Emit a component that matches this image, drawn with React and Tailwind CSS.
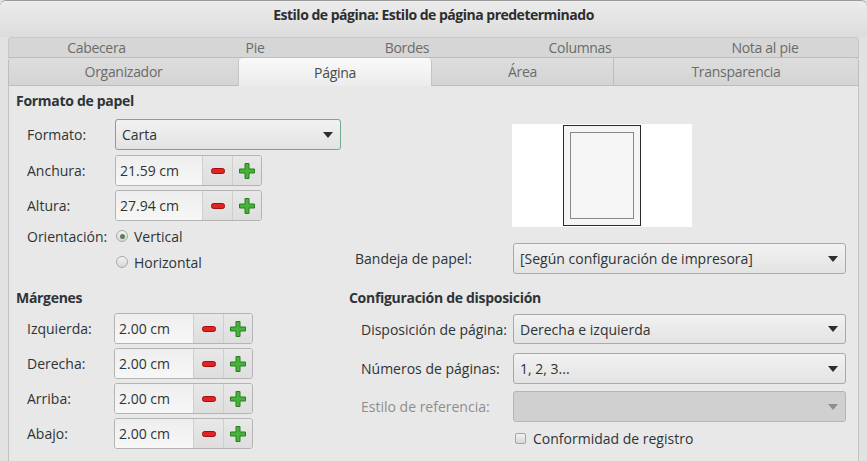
import React from "react";

const font = { fontFamily: '"Open Sans", "Noto Sans", sans-serif' };

function Arrow({ disabled }) {
  return (
    <svg width="10" height="6" viewBox="0 0 10 6" className="shrink-0">
      <path d="M0 0 L10 0 L5 6 Z" fill={disabled ? "#8e8e8e" : "#2e2e2e"} />
    </svg>
  );
}

function Minus() {
  return (
    <svg width="14" height="6" viewBox="0 0 14 6">
      <rect x="0.5" y="0.5" width="13" height="5" rx="2" fill="#e02424" stroke="#a01010" strokeWidth="1" />
    </svg>
  );
}

function Plus() {
  return (
    <svg width="16" height="16" viewBox="0 0 16 16">
      <path
        d="M6 0.5 H10 V6 H15.5 V10 H10 V15.5 H6 V10 H0.5 V6 H6 Z"
        fill="#46b43a"
        stroke="#2a7d20"
        strokeWidth="1"
        strokeLinejoin="round"
      />
    </svg>
  );
}

function Spin({ value, entryW }) {
  return (
    <div className="flex h-[31px] rounded-[3px] border border-[#b4b4b4] overflow-hidden">
      <div
        className={`${entryW} flex items-center pl-[4px] text-[14px] text-[#2e3436] bg-gradient-to-b from-[#eeeeee] to-[#f7f7f7]`}
      >
        {value}
      </div>
      <div className="w-[30px] flex items-center justify-center border-l border-[#cfcfcf] bg-gradient-to-b from-[#e8e8e8] to-[#dedede]">
        <Minus />
      </div>
      <div className="w-[29px] flex items-center justify-center border-l border-[#cfcfcf] bg-gradient-to-b from-[#e8e8e8] to-[#dedede]">
        <Plus />
      </div>
    </div>
  );
}

function Dropdown({ value, w, h = "h-[31px]", focus, disabled }) {
  const border = focus ? "border-[#6fab8c]" : disabled ? "border-[#b5b5b5]" : "border-[#a9a9a9]";
  const bg = disabled ? "bg-[#d0d0d0]" : "bg-gradient-to-b from-[#f2f2f2] to-[#e3e3e3]";
  return (
    <div
      className={`${w} ${h} ${bg} border ${border} rounded-[3px] flex items-center justify-between pl-[6px] pr-[7px] text-[14px] text-[#2e3436]`}
    >
      <span>{value}</span>
      <Arrow disabled={disabled} />
    </div>
  );
}

function Radio({ checked }) {
  return (
    <div className="w-[12px] h-[12px] rounded-full border border-[#a8a8a8] bg-gradient-to-b from-[#f4f4f4] to-[#d6d6d6] flex items-center justify-center">
      {checked && <div className="w-[5px] h-[5px] rounded-full bg-[#5e7f4e]" />}
    </div>
  );
}

export default function App() {
  const backTabs = [
    ["Cabecera", "w-[175px]"],
    ["Pie", "w-[142px]"],
    ["Bordes", "w-[162px]"],
    ["Columnas", "w-[184px]"],
    ["Nota al pie", "flex-1"],
  ];
  return (
    <div className="w-[867px] h-[461px] overflow-hidden bg-[#e2e2e2] flex flex-col" style={font}>
      {/* title bar */}
      <div className="h-[37px] shrink-0 bg-gradient-to-b from-[#ececec] to-[#dcdcdc] rounded-t-[6px] border-t border-[#9a9a9a] flex justify-center pt-[5px]">
        <span className="text-[14px] font-bold text-[#2e2e2e] tracking-[-0.5px] leading-[18px]">
          Estilo de página: Estilo de página predeterminado
        </span>
      </div>

      {/* back tab row */}
      <div className="mx-[8px] h-[20px] shrink-0 flex bg-[#d6d6d6] border border-b-0 border-[#c8c8c8] rounded-t-[4px]">
        {backTabs.map(([t, w]) => (
          <div key={t} className={`${w} flex items-center justify-center text-[14px] text-[#6b6b6b] leading-none tracking-[-0.3px]`}>
            {t}
          </div>
        ))}
      </div>

      {/* front tab row */}
      <div className="mx-[8px] h-[29px] shrink-0 flex border-t border-[#bcbcbc]">
        <div className="w-[230px] flex items-center justify-center bg-gradient-to-b from-[#dddddd] to-[#d4d4d4] border-l border-b border-[#bdbdbd] rounded-tl-[4px] text-[14px] text-[#6b6b6b] tracking-[-0.3px]">
          Organizador
        </div>
        <div className="w-[194px] flex items-center justify-center bg-gradient-to-b from-[#fafafa] to-[#ececec] border-x border-[#c4c4c4] rounded-t-[4px] text-[14px] text-[#4a4a4a] tracking-[-0.3px]">
          Página
        </div>
        <div className="w-[181px] flex items-center justify-center bg-gradient-to-b from-[#dddddd] to-[#d4d4d4] border-b border-[#bdbdbd] text-[14px] text-[#6b6b6b] tracking-[-0.3px]">
          Área
        </div>
        <div className="flex-1 flex items-center justify-center bg-gradient-to-b from-[#dddddd] to-[#d4d4d4] border-l border-r border-b border-[#bdbdbd] rounded-tr-[4px] text-[14px] text-[#6b6b6b] tracking-[-0.3px]">
          Transparencia
        </div>
      </div>

      {/* content */}
      <div className="mx-[8px] flex-1 flex bg-[#e8e8e8] border-x border-[#c2c2c2] text-[14px] text-[#2e3436]">
        {/* left column */}
        <div className="w-[336px] shrink-0 flex flex-col pl-[7px] pt-[6px]">
          <div className="font-bold leading-[18px] h-[18px] tracking-[-0.3px]">Formato de papel</div>
          <div className="flex items-center mt-[9px] pl-[11px]">
            <span className="w-[88px]">Formato:</span>
            <Dropdown value="Carta" w="w-[226px]" h="h-[31px]" focus />
          </div>
          <div className="flex items-center mt-[5px] pl-[11px]">
            <span className="w-[88px]">Anchura:</span>
            <Spin value="21.59 cm" entryW="w-[86px]" />
          </div>
          <div className="flex items-center mt-[4px] pl-[11px]">
            <span className="w-[88px]">Altura:</span>
            <Spin value="27.94 cm" entryW="w-[86px]" />
          </div>
          <div className="flex items-center mt-[5px] pl-[11px] h-[20px]">
            <span className="w-[89px]">Orientación:</span>
            <Radio checked />
            <span className="ml-[6px]">Vertical</span>
          </div>
          <div className="flex items-center mt-[6px] pl-[100px] h-[20px]">
            <Radio />
            <span className="ml-[6px]">Horizontal</span>
          </div>
          <div className="font-bold leading-[18px] h-[18px] mt-[17px] tracking-[-0.3px]">Márgenes</div>
          <div className="flex flex-col gap-[4px] mt-[6px] pl-[11px]">
            {["Izquierda:", "Derecha:", "Arriba:", "Abajo:"].map((l) => (
              <div key={l} className="flex items-center">
                <span className="w-[87px]">{l}</span>
                <Spin value="2.00 cm" entryW="w-[78px]" />
              </div>
            ))}
          </div>
        </div>

        {/* right column */}
        <div className="flex-1 flex flex-col pt-[38px]">
          <div className="ml-[167px] w-[180px] h-[103px] bg-white flex justify-center items-center">
            <div className="w-[78px] h-[101px] border border-[#2a2a2a] bg-[#f5f5f5] flex items-center justify-center">
              <div className="w-[64px] h-[87px] border border-[#888888] bg-[#f5f5f5]" />
            </div>
          </div>
          <div className="flex items-center mt-[16px] pl-[10px]">
            <span className="w-[158px]">Bandeja de papel:</span>
            <Dropdown value="[Según configuración de impresora]" w="w-[333px]" />
          </div>
          <div className="font-bold leading-[18px] h-[18px] mt-[15px] pl-[4px] tracking-[-0.3px]">
            Configuración de disposición
          </div>
          <div className="flex flex-col mt-[7px] pl-[16px]">
            <div className="flex items-center">
              <span className="w-[152px]">Disposición de página:</span>
              <Dropdown value="Derecha e izquierda" w="w-[333px]" h="h-[30px]" />
            </div>
            <div className="flex items-center mt-[9px]">
              <span className="w-[152px]">Números de páginas:</span>
              <Dropdown value="1, 2, 3..." w="w-[333px]" />
            </div>
            <div className="flex items-center mt-[7px]">
              <span className="w-[152px] text-[#8e8e8e]">Estilo de referencia:</span>
              <Dropdown value="" w="w-[333px]" disabled />
            </div>
            <div className="flex items-center mt-[6px] pl-[154px]">
              <div className="w-[11px] h-[11px] border border-[#a6a6a6] rounded-[2px] bg-gradient-to-b from-[#f2f2f2] to-[#d8d8d8]" />
              <span className="ml-[7px]">Conformidad de registro</span>
            </div>
          </div>
        </div>
      </div>
    </div>
  );
}
